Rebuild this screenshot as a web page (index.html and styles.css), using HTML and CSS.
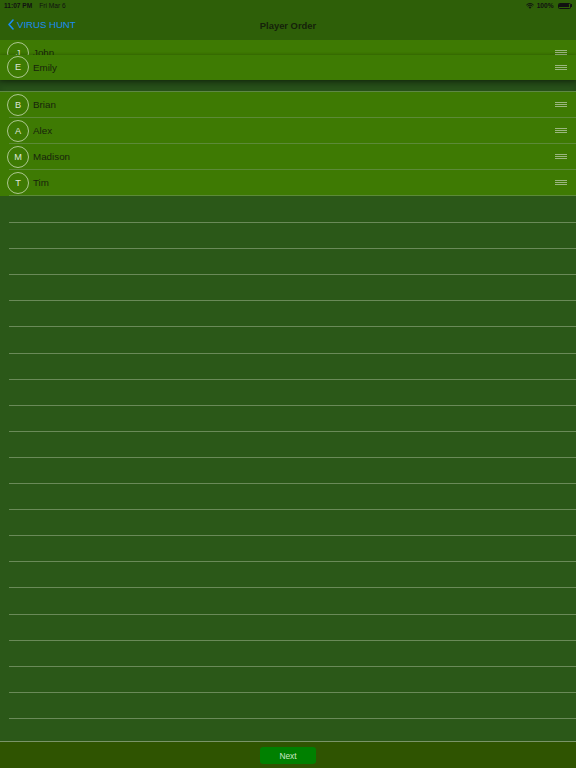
FILE: index.html
```html
<!DOCTYPE html>
<html lang="en">
<head>
<meta charset="utf-8">
<title>Player Order</title>
<link rel="stylesheet" href="styles.css">
</head>
<body>
<div class="screen">
  <header class="top">
    <div class="status">
      <div class="status-left"><span class="time">11:07 PM</span><span class="date">Fri Mar 6</span></div>
      <div class="status-right">
        <svg class="wifi" width="8" height="6" viewBox="0 0 8 6"><path d="M4 5.8 L2.6 4.3 A2 2 0 0 1 5.4 4.3 Z" fill="#111"/><path d="M1.5 3.2 A3.6 3.6 0 0 1 6.5 3.2" stroke="#111" stroke-width="1" fill="none"/><path d="M0.4 2 A5.2 5.2 0 0 1 7.6 2" stroke="#111" stroke-width="1" fill="none"/></svg>
        <span class="pct">100%</span>
        <span class="battery"><span class="battery-fill"></span></span><span class="battery-nub"></span>
      </div>
    </div>
    <nav class="navbar">
      <a class="back"><svg width="6" height="11" viewBox="0 0 6 11"><path d="M5 1 L1 5.5 L5 10" stroke="#1a8cf2" stroke-width="1.6" fill="none" stroke-linecap="round" stroke-linejoin="round"/></svg><span>VIRUS HUNT</span></a>
      <h1 class="title">Player Order</h1>
    </nav>
  </header>

  <main class="table">
    <div class="row"><span class="avatar">J</span><span class="name">John</span><span class="handle"></span></div>
    <div class="row slot"></div>
    <div class="row"><span class="avatar">B</span><span class="name">Brian</span><span class="handle"></span></div>
    <div class="row"><span class="avatar">A</span><span class="name">Alex</span><span class="handle"></span></div>
    <div class="row"><span class="avatar">M</span><span class="name">Madison</span><span class="handle"></span></div>
    <div class="row"><span class="avatar">T</span><span class="name">Tim</span><span class="handle"></span></div>
    <div class="empties">
      <div class="empty"></div><div class="empty"></div><div class="empty"></div><div class="empty"></div>
      <div class="empty"></div><div class="empty"></div><div class="empty"></div><div class="empty"></div>
      <div class="empty"></div><div class="empty"></div><div class="empty"></div><div class="empty"></div>
      <div class="empty"></div><div class="empty"></div><div class="empty"></div><div class="empty"></div>
      <div class="empty"></div><div class="empty"></div><div class="empty"></div><div class="empty"></div>
    </div>

    <!-- row being dragged, lifted above the list -->
    <div class="row dragging"><span class="avatar">E</span><span class="name">Emily</span><span class="handle"></span></div>
  </main>

  <footer class="toolbar">
    <button class="next">Next</button>
  </footer>
</div>
</body>
</html>
```

FILE: styles.css
```css
* { box-sizing: border-box; }

html, body {
  margin: 0;
  padding: 0;
  background: #2b5818;
}

body {
  font-family: "Liberation Sans", Arial, sans-serif;
}

.screen {
  width: 576px;
  height: 768px;
  display: flex;
  flex-direction: column;
  overflow: hidden;
}

/* status + navigation */
.top {
  background: #2e5f08;
  height: 40px;
  flex: none;
}

.status {
  height: 11px;
  display: flex;
  justify-content: space-between;
  align-items: center;
  padding: 0 4px;
  font-size: 6.6px;
  color: #111;
}

.status-left .time { font-weight: bold; margin-right: 7px; }

.status-right {
  display: flex;
  align-items: center;
  gap: 3px;
}

.status-right .pct { font-weight: bold; margin-right: 1px; }

.battery {
  width: 13px;
  height: 6px;
  border: 0.7px solid #111;
  border-radius: 1.5px;
  padding: 0.7px;
  display: flex;
}

.battery-fill { flex: 1; background: #111; border-radius: 0.6px; }

.battery-nub {
  width: 1px;
  height: 2.5px;
  background: #111;
  margin-left: -2.5px;
}

.navbar {
  height: 29px;
  position: relative;
  display: flex;
  align-items: center;
  justify-content: center;
}

.back {
  position: absolute;
  left: 8px;
  top: 8px;
  display: flex;
  align-items: center;
  gap: 3px;
  color: #1a8cf2;
  font-size: 9.6px;
}

.title {
  margin: 0;
  font-size: 9.4px;
  font-weight: bold;
  color: #15220a;
  margin-top: -1px;
}

/* player list */
.table {
  flex: 1;
  position: relative;
  display: flex;
  flex-direction: column;
}

.row {
  height: 26px;
  flex: none;
  background: #3e7a03;
  display: flex;
  align-items: center;
  padding: 0 9px 0 7px;
  position: relative;
}

.row::after {
  content: "";
  position: absolute;
  left: 9px;
  right: 0;
  bottom: 0;
  height: 1px;
  background: #5c8a38;
}

.row.slot {
  background: #28521a;
  box-shadow: inset 0 14px 10px -4px rgba(0, 0, 0, 0.35);
}

.row.slot::after { left: 0; background: #5e8746; }

.avatar {
  width: 22px;
  height: 22px;
  border-radius: 50%;
  border: 1px solid rgba(230, 240, 220, 0.65);
  color: #dfe6d8;
  font-size: 9.2px;
  display: flex;
  align-items: center;
  justify-content: center;
  flex: none;
  margin-top: -1px;
}

.name {
  flex: 1;
  margin-left: 4px;
  font-size: 9.8px;
  color: #17240b;
  margin-top: -1px;
}

.handle {
  width: 12px;
  height: 5px;
  flex: none;
  margin-top: -1px;
  background: repeating-linear-gradient(to bottom, rgba(205, 215, 195, 0.65) 0 1px, transparent 1px 2px);
}

.dragging {
  position: absolute;
  left: 0;
  right: 0;
  top: 15px;
  height: 25px;
  background: #3e7b03;
  box-shadow: 0 0 3px rgba(0, 0, 0, 0.25), 0 4px 6px rgba(0, 0, 0, 0.3);
}

.dragging::after { display: none; }

.empties {
  padding-top: 1px;
  display: flex;
  flex-direction: column;
}

.empty {
  height: 26.1px;
  flex: none;
  position: relative;
}

.empty::after {
  content: "";
  position: absolute;
  left: 9px;
  right: 0;
  bottom: 0;
  height: 1px;
  background: #6a8a58;
}

/* bottom toolbar */
.toolbar {
  height: 27px;
  flex: none;
  background: #2f5401;
  border-top: 1px solid #7a9468;
  display: flex;
  justify-content: center;
  align-items: center;
}

.next {
  width: 56px;
  height: 17px;
  border: none;
  border-radius: 3px;
  background: #008000;
  color: #cfe6c8;
  font-family: "Liberation Sans", Arial, sans-serif;
  font-size: 8.4px;
  padding: 0;
  margin-top: 1px;
}
```
